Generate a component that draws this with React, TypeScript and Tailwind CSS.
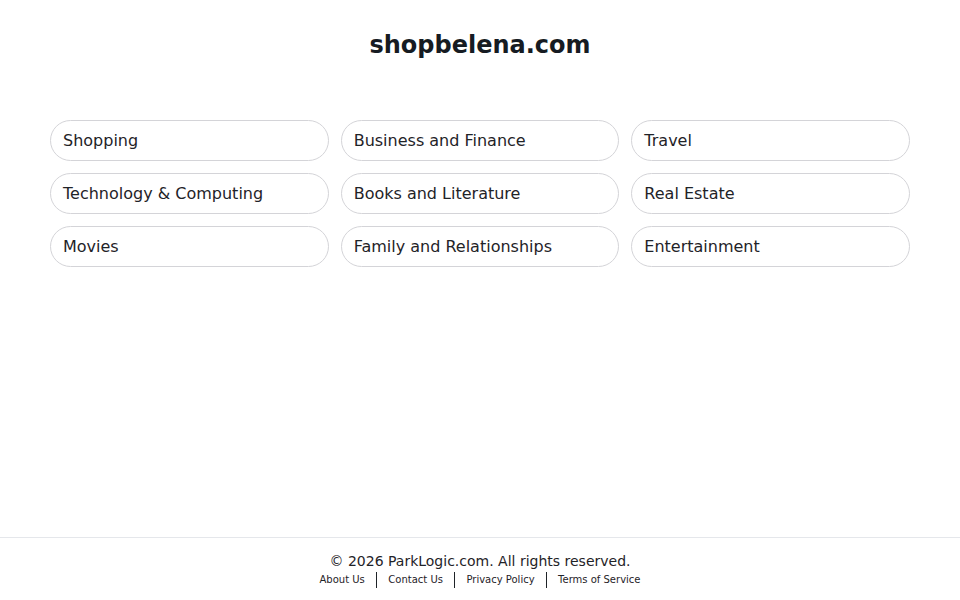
const categories = [
  "Shopping",
  "Business and Finance",
  "Travel",
  "Technology & Computing",
  "Books and Literature",
  "Real Estate",
  "Movies",
  "Family and Relationships",
  "Entertainment",
];

const links = ["About Us", "Contact Us", "Privacy Policy", "Terms of Service"];

export default function App() {
  return (
    <div className="min-h-screen flex flex-col bg-white text-[#1f2328] font-['DejaVu_Sans',sans-serif]">
      <main className="flex-1">
        <h1 className="pt-[29px] text-center text-[24px] font-bold leading-[32px] text-[#161b22]">
          shopbelena.com
        </h1>

        <div className="mx-[50px] mt-[59px] grid grid-cols-3 gap-x-[12px] gap-y-[12px]">
          {categories.map((c) => (
            <a
              key={c}
              href="#"
              className="h-[41px] flex items-center rounded-full border border-[#d4d4d8] px-[12px] text-[16px] text-[#1f2328]"
            >
              {c}
            </a>
          ))}
        </div>
      </main>

      <footer className="h-[63px] border-t border-[#e5e7eb] flex flex-col items-center pt-[14px]">
        <p className="text-[14px] leading-[18px] text-[#1f2328]">
          © 2026 ParkLogic.com. All rights reserved.
        </p>
        <div className="mt-[2px] flex items-center text-[10px] leading-[16px] text-[#1f2328]">
          {links.map((l, i) => (
            <span key={l} className="flex items-center">
              {i > 0 && <span className="mx-[11px] h-[16px] w-[1.5px] bg-[#1f2328]" />}
              <a href="#">{l}</a>
            </span>
          ))}
        </div>
      </footer>
    </div>
  );
}
